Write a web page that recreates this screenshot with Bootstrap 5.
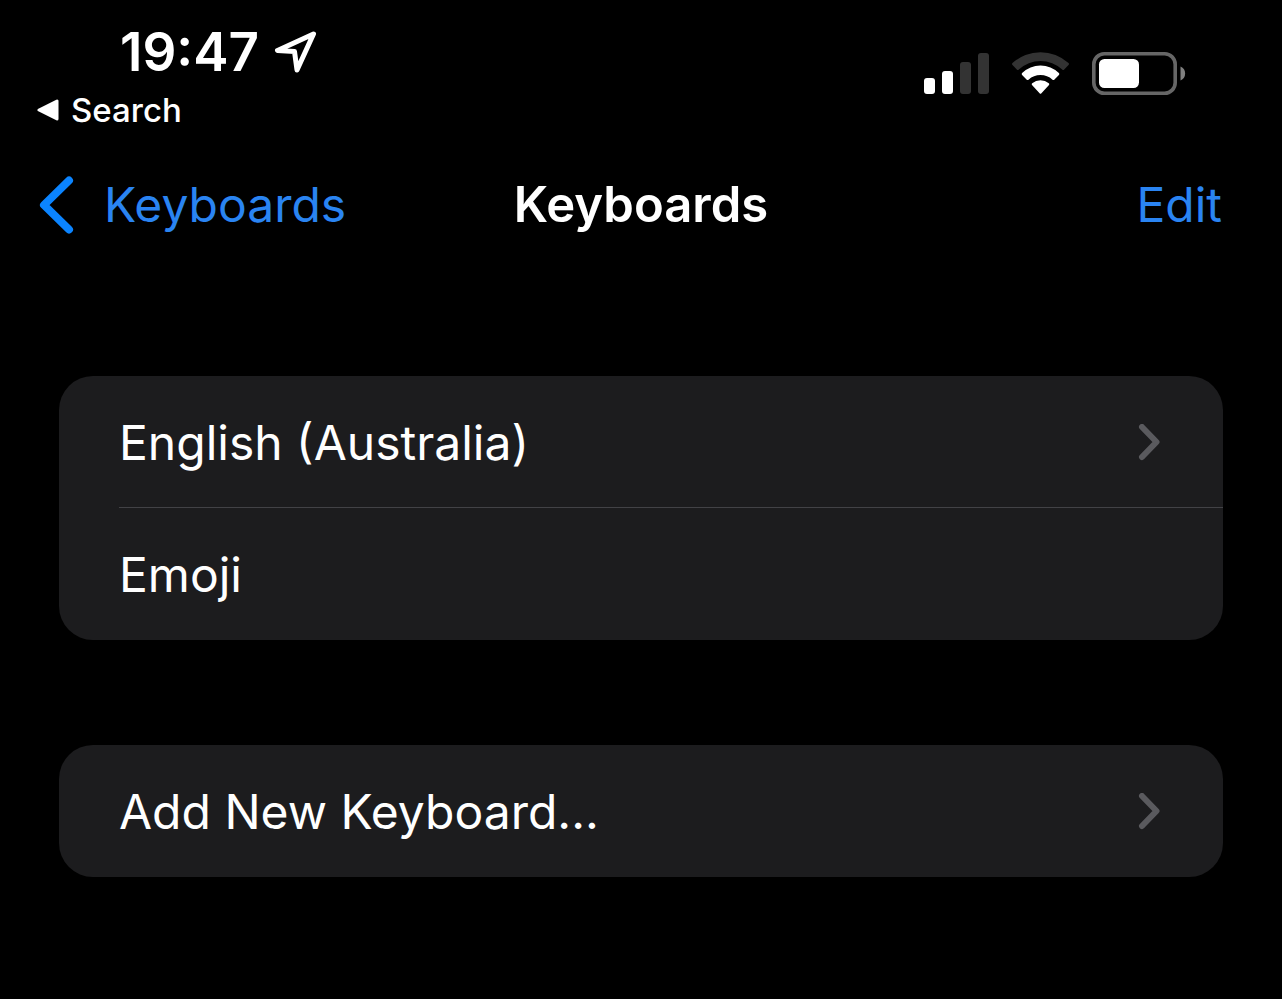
<!DOCTYPE html>
<html lang="en" data-bs-theme="dark">
<head>
<meta charset="utf-8">
<meta name="viewport" content="width=device-width, initial-scale=1">
<title>Keyboards</title>
<link rel="stylesheet" href="https://cdn.jsdelivr.net/npm/bootstrap@5.3.0/dist/css/bootstrap.min.css">
<style>
  body { background: #000; color: #fff; font-family: Inter, "Liberation Sans", sans-serif; font-size: 48px; line-height: 60px; }
  svg { display: block; flex: none; }
  .status-bar { padding: 24px 96px 0 36px; }
  .clock { font-size: 53px; line-height: 56px; font-weight: 600; padding-left: 84px; gap: 15px; }
  .back-app { font-size: 33px; line-height: 40px; font-weight: 500; margin-top: 10px; gap: 12px; }
  .indicators { padding-top: 28px; gap: 22px; }
  .nav-bar { display: grid; grid-template-columns: 1fr auto 1fr; padding: 45px 60px 15px 39px; }
  .nav-bar a { color: #2a84f2; }
  .nav-bar h1 { font-size: 49px; line-height: 60px; font-weight: 600; padding-left: 21px; }
  .nav-back { gap: 30px; }
  .settings { padding: 126px 59px 60px; gap: 105px; }
  .settings .list-group { border-radius: 34px; overflow: hidden; background: #1c1c1e; }
  .settings .list-group-item { background: none; border: 0; color: #fff; padding: 0 0 0 60px; }
  .cell { padding: 37px 62px 35px 0; }
  .list-group-item + .list-group-item .cell { border-top: 1px solid #424246; margin-top: -1px; }
</style>
</head>
<body>
<header>
  <div class="status-bar d-flex justify-content-between align-items-start">
    <div>
      <div class="clock d-flex align-items-center">
        <span>19:47</span>
        <svg width="43" height="44" viewBox="0 0 43 44" fill="none" stroke="#fff" stroke-width="5" stroke-linejoin="round" aria-hidden="true"><path d="M39.500 4 3.500 20.500 20.500 21.500 23 40Z"/></svg>
      </div>
      <a href="#" class="back-app d-flex align-items-center text-white text-decoration-none">
        <svg width="23" height="22" viewBox="0 0 23 22" fill="#fff" stroke="#fff" stroke-width="3" stroke-linejoin="round" aria-hidden="true"><path d="M3 11 21 2V20Z"/></svg>
        <span>Search</span>
      </a>
    </div>
    <div class="indicators d-flex align-items-center">
      <svg width="66" height="43" viewBox="0 0 66 43" role="img" aria-label="Signal">
        <g fill="#fff"><rect x="0" y="26" width="11" height="16" rx="3"/><rect x="18" y="19" width="11" height="23" rx="3"/></g>
        <g fill="#333"><rect x="36" y="10" width="11" height="32" rx="3"/><rect x="54" y="1" width="11" height="41" rx="3"/></g>
      </svg>
      <svg width="58" height="43" viewBox="0.500 0 58 43" role="img" aria-label="Wi-Fi">
        <path fill="#333" d="M1 13Q0 12 1 11A41.500 41.500 0 0 1 57 11Q58 12 57 13L52.700 17.500Q51.700 18.500 50.700 17.500A32 32 0 0 0 7.300 17.500Q6.300 18.500 5.300 17.500Z"/>
        <path fill="#fff" d="M10.600 23Q9.600 22 10.600 21A26.500 26.500 0 0 1 47.400 21Q48.400 22 47.400 23L43 27.500Q42 28.500 41 27.700A18 18 0 0 0 17 27.700Q16 28.500 15 27.500Z"/>
        <path fill="#fff" d="M20.500 33Q19.700 32 20.700 31.200A13 13 0 0 1 37.300 31.200Q38.300 32 37.500 33L29.700 41.400Q29 42 28.300 41.400Z"/>
      </svg>
      <svg width="94" height="43" viewBox="0 0 94 43" role="img" aria-label="Battery">
        <rect x="1.800" y="1.800" width="81.400" height="39.400" rx="10.500" fill="none" stroke="#666" stroke-width="3.600"/>
        <rect x="7" y="7" width="40" height="29" rx="5.500" fill="#fff"/>
        <path fill="#808080" d="M88.500 14.500A7.600 7.600 0 0 1 88.500 28.500Z"/>
      </svg>
    </div>
  </div>
  <nav class="nav-bar align-items-center">
    <a href="#" class="nav-back d-flex align-items-center text-decoration-none">
      <svg width="35" height="60" viewBox="0 0 35 60" fill="none" stroke="#0b84ff" stroke-width="8" stroke-linecap="round" stroke-linejoin="round" aria-hidden="true"><path d="M30 5.500 5 30 30 54.500"/></svg>
      <span>Keyboards</span>
    </a>
    <h1 class="m-0">Keyboards</h1>
    <a href="#" class="text-end text-decoration-none">Edit</a>
  </nav>
</header>
<main class="settings d-flex flex-column">
  <div class="list-group">
    <a href="#" class="list-group-item">
      <span class="cell d-flex align-items-center justify-content-between"><span>English (Australia)</span>
        <svg width="23" height="38" viewBox="0 0 23 38" fill="none" stroke="#5a5a5e" stroke-width="6" stroke-linecap="round" stroke-linejoin="round" aria-hidden="true"><path d="M4 3 18.500 18 4 33"/></svg></span>
    </a>
    <div class="list-group-item"><span class="cell d-flex">Emoji</span></div>
  </div>
  <div class="list-group">
    <a href="#" class="list-group-item">
      <span class="cell d-flex align-items-center justify-content-between"><span>Add New Keyboard...</span>
        <svg width="23" height="38" viewBox="0 0 23 38" fill="none" stroke="#5a5a5e" stroke-width="6" stroke-linecap="round" stroke-linejoin="round" aria-hidden="true"><path d="M4 3 18.500 18 4 33"/></svg></span>
    </a>
  </div>
</main>
<script src="https://cdn.jsdelivr.net/npm/bootstrap@5.3.0/dist/js/bootstrap.bundle.min.js"></script>
</body>
</html>
